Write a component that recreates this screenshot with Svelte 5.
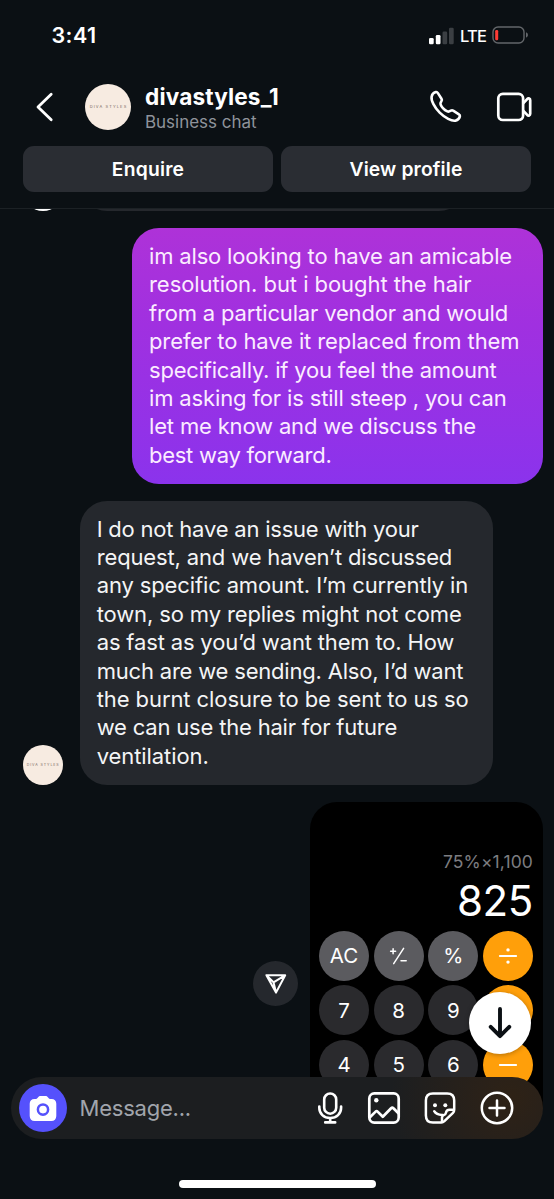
<script>
  const sent = [
    ['im also looking to have an amicable', 363],
    ['resolution. but i bought the hair', 322.5],
    ['from a particular vendor and would', 359],
    ['prefer to have it replaced from them', 370.5],
    ['specifically. if you feel the amount', 347.5],
    ['im asking for is still steep , you can', 357.5],
    ['let me know and we discuss the', 327],
    ['best way forward.', 182.5]
  ];
  const received = [
    ['I do not have an issue with your', 322],
    ['request, and we haven’t discussed', 355.5],
    ['any specific amount. I’m currently in', 371.5],
    ['town, so my replies might not come', 365],
    ['as fast as you’d want them to. How', 357.5],
    ['much are we sending. Also, I’d want', 366.5],
    ['the burnt closure to be sent to us so', 372],
    ['we can use the hair for future', 300.5],
    ['ventilation.', 112]
  ];
  const keys = [
    ['AC', 'fn'], ['+/-', 'fn'], ['%', 'fn'], ['÷', 'op'],
    ['7', ''], ['8', ''], ['9', ''], ['×', 'op'],
    ['4', ''], ['5', ''], ['6', ''], ['−', 'op']
  ];

  // Tracks a single line of text so that it fills the given width.
  function fit(node, width) {
    const n = node.textContent.length;
    const natural = node.getBoundingClientRect().width;
    node.style.letterSpacing = `${(width - natural) / n}px`;
  }
</script>

<main class="phone">
  <div class="status">
    <span class="time"><span class="ln" use:fit={45}>3:41</span></span>
    <div class="indicators">
      <svg width="26" height="18" viewBox="0 0 26 18">
        <rect x="0" y="11" width="4.7" height="6.2" rx="1.3" fill="#fff" />
        <rect x="6.8" y="8" width="4.7" height="9.2" rx="1.3" fill="#fff" />
        <rect x="13.5" y="4.6" width="4.7" height="12.6" rx="1.3" fill="#3b3f43" />
        <rect x="20" y="0.8" width="4.7" height="16.4" rx="1.3" fill="#3b3f43" />
      </svg>
      <span class="lte"><span class="ln" use:fit={26}>LTE</span></span>
      <svg width="37" height="19" viewBox="0 0 37 19">
        <rect x="1" y="1" width="31" height="16" rx="5" fill="none" stroke="#63666a" stroke-width="1.4" />
        <rect x="3.2" y="3.9" width="3" height="10.4" rx="1.3" fill="#ff3b35" />
        <path d="M34 6.3q2 .8 2 2.7t-2 2.7z" fill="#63666a" />
      </svg>
    </div>
  </div>

  <header>
    <svg class="back" width="20" height="32" viewBox="0 0 20 32">
      <path d="M16.2 3.2 3 16l13.200 12.800" fill="none" stroke="#fff" stroke-width="2.8" stroke-linecap="round" stroke-linejoin="round" />
    </svg>
    <div class="avatar big"><span>DIVA STYLES</span></div>
    <div class="who">
      <strong><span class="ln" use:fit={134}>divastyles_1</span></strong>
      <small><span class="ln" use:fit={111.5}>Business chat</span></small>
    </div>
    <svg class="call" width="34" height="34" viewBox="0 0 34 34">
      <path d="M2.600 6.700C3 4.500 5 2.500 6.800 2.100c.9-.2 1.600.2 2.100 1l3.600 5.600c.6.900.500 1.700-.1 2.500-.8 1.200-1.400 1.900-.8 3.400 1.100 2.800 4.300 5.700 6.800 6.800 1.400.6 2.200.1 3.400-.700.8-.5 1.500-.6 2.400 0l5.700 3.600c.8.500 1.200 1.200 1 2.100-.4 1.900-2.200 3.700-4.500 4.300-3.500.8-10.500-2.800-15.700-8S1.900 10.400 2.600 6.700z" fill="none" stroke="#fff" stroke-width="2.600" stroke-linejoin="round" />
    </svg>
    <svg class="video" width="36" height="32" viewBox="0 0 36 32">
      <g fill="none" stroke="#fff" stroke-width="2.700" stroke-linejoin="round">
        <rect x="2.300" y="2.800" width="24.800" height="26.200" rx="4.500" />
        <path d="M27.200 12.200 31.200 8.100c1.300-1.200 3-.5 3 1.200v13.400c0 1.700-1.700 2.400-3 1.200l-4-4.100" />
      </g>
    </svg>
  </header>

  <div class="actions">
    <button><span class="ln" use:fit={72.5}>Enquire</span></button>
    <button><span class="ln" use:fit={113}>View profile</span></button>
  </div>

  <section class="chat">
    <div class="row prev">
      <div class="avatar"></div>
      <div class="bubble gray"></div>
    </div>
    <div class="row right">
      <div class="bubble purple">
        {#each sent as [text, width]}<p><span class="ln" use:fit={width}>{text}</span></p>{/each}
      </div>
    </div>
    <div class="row">
      <div class="avatar"><span>DIVA STYLES</span></div>
      <div class="bubble gray">
        {#each received as [text, width]}<p><span class="ln" use:fit={width}>{text}</span></p>{/each}
      </div>
    </div>
    <div class="row right photo">
      <div class="share">
        <svg width="24" height="24" viewBox="0 0 24 24">
          <path d="M2.400 3.200h18.800L12 20.600zM9.500 10.300 21 3.300M2.400 3.200l7.100 7.100L12 20.600" fill="none" stroke="#fff" stroke-width="2" stroke-linejoin="round" />
        </svg>
      </div>
      <div class="calc">
        <div class="expr"><span class="ln" use:fit={90}>75%×1,100</span></div>
        <div class="result"><span class="ln" use:fit={76}>825</span></div>
        <div class="keys">
          {#each keys as [label, kind]}
            <div class="key {kind}">
              {#if label === '÷'}
                <svg width="20" height="20" viewBox="0 0 20 20"><path d="M1.800 10h16.400" stroke="#fff" stroke-width="1.800" stroke-linecap="round" /><circle cx="10" cy="3.900" r="1.700" fill="#fff" /><circle cx="10" cy="16.100" r="1.700" fill="#fff" /></svg>
              {:else if label === '−'}
                <svg width="20" height="20" viewBox="0 0 20 20"><path d="M1.800 10h16.400" stroke="#fff" stroke-width="1.800" stroke-linecap="round" /></svg>
              {:else if label === '×'}
                <svg width="20" height="20" viewBox="0 0 20 20"><path d="m4 4 12 12M16 4 4 16" stroke="#fff" stroke-width="1.800" stroke-linecap="round" /></svg>
              {:else if label === '+/-'}
                <svg width="20" height="20" viewBox="0 0 20 20"><path d="M1.600 5.200h5M4.100 2.700v5M4.700 17.600 14.600 2.300M12 14.800h5.200" fill="none" stroke="#fff" stroke-width="1.500" stroke-linecap="round" /></svg>
              {:else}{label}{/if}
            </div>
          {/each}
        </div>
      </div>
    </div>
  </section>

  <div class="down">
    <svg width="26" height="34" viewBox="0 0 26 34">
      <path d="M13 3v27M3.700 20.800 13 30.200l9.300-9.400" fill="none" stroke="#0b1014" stroke-width="3.900" stroke-linecap="round" stroke-linejoin="round" />
    </svg>
  </div>

  <div class="composer">
    <div class="camera">
      <svg width="28" height="27" viewBox="0 0 28 27">
        <path d="M8.500 3.100C9.300 1.500 10.300.900 11.700.900h4.600c1.400 0 2.400.6 3.200 2.200.3.500.7.800 1.300.800h1.700c2.900 0 4.800 1.900 4.800 4.800v12.400c0 3.100-1.900 5-5 5H5.700c-3.100 0-5-1.900-5-5V8.700c0-2.900 1.900-4.800 4.800-4.800h1.700c.6 0 1-.3 1.300-.8z" fill="#fff" />
        <circle cx="14" cy="14.600" r="5.100" fill="none" stroke="#5551fc" stroke-width="2.500" />
      </svg>
    </div>
    <span class="hint"><span class="ln" use:fit={111.5}>Message...</span></span>
    <div class="tools">
      <svg class="mic" width="26" height="34" viewBox="0 0 26 34">
        <g fill="none" stroke="#fff" stroke-width="2.600" stroke-linecap="round" stroke-linejoin="round">
          <rect x="7.200" y="2.500" width="12" height="20.200" rx="6" />
          <path d="M2.300 15.500v1.300c0 6 4.500 10.200 10.900 10.200s10.900-4.200 10.900-10.200v-1.300M13.200 27v4.300M8.200 31.400h10" />
        </g>
      </svg>
      <svg width="34" height="34" viewBox="0 0 34 34">
        <g fill="none" stroke="#fff" stroke-width="2.700" stroke-linecap="round" stroke-linejoin="round">
          <rect x="2.300" y="2.400" width="29.400" height="29.200" rx="5" />
          <path d="m2.900 26.300 5.700-5.700c.7-.7 1.300-.7 2 0l5.200 5.200 8.300-8.500c.8-.8 1.500-.8 2.300 0l5 5" />
        </g>
        <circle cx="9.300" cy="9.300" r="2.200" fill="#fff" />
      </svg>
      <svg width="34" height="34" viewBox="0 0 34 34">
        <g fill="none" stroke="#fff" stroke-width="2.500" stroke-linecap="round" stroke-linejoin="round">
          <path d="M31.200 18.800V9.500c0-4.400-2.600-7-7-7H9.900c-4.500 0-7 2.600-7 7v14.900c0 4.500 2.500 7.100 7 7.100h8.200c1.300 0 2.400-.4 3.300-1.300l8.600-8.300c.8-.8 1.200-1.800 1.200-3.100z" />
          <path d="M19 31v-4.600c0-1.300.6-2 1.900-2.300 1.300-.3 1.800-.9 2-2.200.3-2.100 1.600-3.200 3.700-3.200h4.200M11.200 20.200c1.500 2.500 4.400 3.900 8.700 3.700" />
        </g>
        <circle cx="12" cy="14.300" r="2" fill="#fff" /><circle cx="22.300" cy="14.300" r="2" fill="#fff" />
      </svg>
      <svg width="36" height="36" viewBox="0 0 36 36">
        <g fill="none" stroke="#fff" stroke-width="2.500" stroke-linecap="round">
          <circle cx="18" cy="18" r="15.200" /><path d="M10.500 18h15M18 10.500v15" />
        </g>
      </svg>
    </div>
  </div>
  <div class="home"></div>
</main>

<style>
  :global(body) { background: #0b1014; }
  .phone { position: relative; width: 554px; height: 1199px; overflow: hidden; background: #0b1014; color: #fff; font-family: Inter, "Liberation Sans", sans-serif; box-sizing: border-box; display: flex; flex-direction: column; }
  .phone * { box-sizing: border-box; }
  svg { display: block; flex: none; }
  .ln { display: inline-block; white-space: nowrap; }
  .status { height: 71px; flex: none; display: flex; justify-content: space-between; padding: 0 25px 0 51.500px; }
  .time { font-size: 21.500px; font-weight: 600; line-height: 71px; }
  .indicators { display: flex; align-items: center; }
  .lte { margin: 1px 6px 0 5px; font-size: 16.500px; font-weight: 500; }
  header { height: 71px; flex: none; display: flex; align-items: center; padding: 0 22px 0 35px; }
  .back { margin-right: 30px; }
  .avatar { width: 40px; height: 40px; flex: none; border-radius: 50%; background: #f7ebe1; color: #776a63; display: flex; align-items: center; justify-content: center; }
  .avatar span { font-size: 3.600px; letter-spacing: 0.900px; white-space: nowrap; margin-right: -1px; }
  .avatar.big { width: 46px; height: 46px; }
  .avatar.big span { font-size: 4px; letter-spacing: 1.100px; }
  .who { flex: 1; margin-left: 14px; padding-top: 4px; display: flex; flex-direction: column; }
  .who strong { font-size: 22.600px; line-height: 27px; font-weight: 700; }
  .who small { font-size: 17px; line-height: 25px; color: #8f939b; }
  .call { margin-right: 33px; }
  .actions { height: 66px; flex: none; display: grid; grid-template-columns: 1fr 1fr; gap: 8px; padding: 4px 23px 0; }
  .actions button { height: 46px; border: 0; border-radius: 11px; background: #2a2d33; color: #fff; font: 600 19.300px Inter, sans-serif; padding: 0; }
  .chat { height: 900px; flex: none; overflow: hidden; border-top: 1px solid #1c2125; padding: 0 11.500px 0 22.700px; display: flex; flex-direction: column; gap: 17px; }
  .row { display: flex; align-items: flex-end; gap: 17px; flex: none; }
  .right { justify-content: flex-end; }
  .prev { margin-top: -57.700px; height: 60px; }
  .prev .bubble { width: 386px; height: 60px; }
  .prev .avatar { background: #fff; }
  .bubble { border-radius: 27px; padding: 13.700px 17px 14.900px; font-size: 22px; line-height: 28.400px; }
  .bubble p { margin: 0; height: 28.400px; white-space: nowrap; }
  .gray { width: 413px; background: #25282d; color: #f4f5f6; }
  .purple { width: 410.500px; background: linear-gradient(#ae32d8, #a030e0 38%, #8b33ec); color: #fbecff; }
  .photo { align-items: center; gap: 11.500px; }
  .share { width: 45px; height: 45px; border-radius: 50%; background: #25282d; display: flex; align-items: center; justify-content: center; }
  .calc { width: 233px; height: 363px; background: #000; border-radius: 27px; padding: 48.500px 9.500px 0; }
  .expr { height: 22px; line-height: 22px; text-align: right; font-size: 17.500px; color: #7d7d81; }
  .result { height: 58px; line-height: 56px; text-align: right; font-size: 42px; }
  .keys { display: grid; grid-template-columns: repeat(4, 50px); gap: 4.700px; }
  .key { height: 50px; border-radius: 50%; background: #2a2a2d; display: flex; align-items: center; justify-content: center; font-size: 20.500px; }
  .fn { background: #5b5b5f; }
  .op { background: #ff9f0a; }
  .down { position: absolute; left: 469px; top: 992px; width: 62px; height: 62px; border-radius: 50%; background: #fff; display: flex; align-items: center; justify-content: center; box-shadow: 0 1px 5px rgba(0, 0, 0, 0.3); }
  .composer { position: absolute; left: 11px; top: 1077px; width: 532px; height: 62px; border-radius: 31px; background: radial-gradient(circle at 500px 20px, #2e2216 0, #2a2119 30px, rgba(28, 30, 33, 0) 120px), #1c1e20; display: flex; align-items: center; padding: 0 28px 0 8px; }
  .camera { width: 48px; height: 48px; flex: none; border-radius: 50%; background: #5551fc; display: flex; align-items: center; justify-content: center; }
  .hint { flex: 1; margin-left: 12.500px; font-size: 22px; color: #a1a5ac; }
  .tools { display: flex; align-items: center; gap: 22px; }
  .mic { margin-right: 2.500px; }
  .home { position: absolute; left: 179px; top: 1180px; width: 197px; height: 8px; border-radius: 4px; background: #fff; }
</style>
